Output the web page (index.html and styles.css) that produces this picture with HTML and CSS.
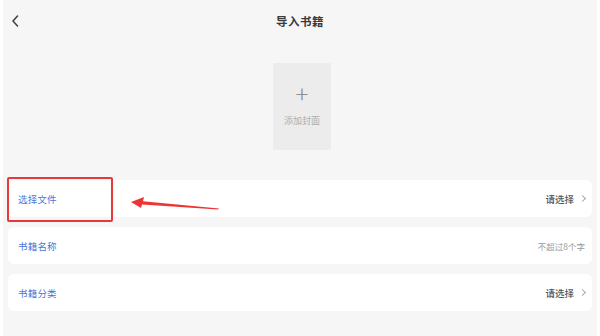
FILE: index.html
```html
<!doctype html>
<html lang="zh-CN">
<head>
  <meta charset="utf-8" />
  <title>导入书籍</title>
  <link rel="stylesheet" href="styles.css">
</head>
<body>
  <div class="page">
    <header class="topbar">
      <svg class="back" width="8" height="12" viewBox="0 0 8 12"><path d="M6.5 1 L2 6 L6.5 11" fill="none" stroke="#444" stroke-width="1.6" stroke-linecap="round" stroke-linejoin="round"/></svg>
      <h1>导入书籍</h1>
    </header>

    <div class="cover">
      <span class="plus">+</span>
      <span class="cover-text">添加封面</span>
    </div>

    <ul class="form">
      <li>
        <span class="label">选择文件</span>
        <span class="value">请选择<i class="chev"></i></span>
      </li>
      <li>
        <span class="label">书籍名称</span>
        <span class="hint">不超过8个字</span>
      </li>
      <li>
        <span class="label">书籍分类</span>
        <span class="value">请选择<i class="chev"></i></span>
      </li>

      <!-- 标注 -->
      <div class="mark-box"></div>
      <svg class="mark-arrow" width="92" height="14" viewBox="0 0 92 14">
        <polygon points="0,5 13,0 12,4.2 88,11.5 87,12.6 11,7.6 10,11" fill="#ee3535"/>
      </svg>
    </ul>
  </div>
</body>
</html>
```

FILE: styles.css
```css
/* ───────────── 기본 ───────────── */
html,body{ margin:0; padding:0; }
body{
  width:600px;
  height:336px;
  overflow:hidden;
  background:#fff;
  font-family:"Noto Sans CJK SC","Noto Sans",sans-serif;
  color:#333;
}
.page{
  height:336px;
  margin:0 3px;
  background:#f6f6f6;
  display:flex;
  flex-direction:column;
}

/* ───────────── 상단 ───────────── */
.topbar{
  position:relative;
  height:42px;
  display:flex;
  align-items:center;
  justify-content:center;
}
.back{
  position:absolute;
  left:8px;
  top:15px;
}
.topbar h1{
  margin:0;
  font-size:11.5px;
  font-weight:700;
  color:#3a3a3a;
  letter-spacing:.5px;
}

/* ───────────── 표지 ───────────── */
.cover{
  align-self:center;
  width:58px;
  height:87px;
  margin:21px 0 0 4px;
  background:#ececec;
  border-radius:2px;
  display:flex;
  flex-direction:column;
  align-items:center;
}
.plus{
  margin-top:18px;
  font-size:24px;
  line-height:24px;
  font-weight:300;
  color:#8d8d8d;
}
.cover-text{
  margin-top:9px;
  font-size:9px;
  color:#adadad;
}

/* ───────────── 목록 ───────────── */
.form{
  position:relative;
  list-style:none;
  margin:30px 0 0;
  padding:0 5px;
  display:flex;
  flex-direction:column;
  gap:10px;
}
.form li{
  height:37px;
  padding:0 7px 0 10px;
  background:#fff;
  border-radius:6px;
  display:flex;
  align-items:center;
  justify-content:space-between;
}
.label{
  font-size:9.5px;
  color:#4a76d6;
  letter-spacing:.2px;
}
.value{
  font-size:9.5px;
  font-weight:500;
  color:#555;
  display:flex;
  align-items:center;
  gap:6px;
}
.chev{
  width:4px;
  height:4px;
  border-top:1px solid #aaa;
  border-right:1px solid #aaa;
  transform:rotate(45deg);
}
.hint{
  font-size:8.5px;
  color:#999;
}

/* ───────────── 표시 ───────────── */
.mark-box{
  position:absolute;
  left:4px;
  top:-3px;
  width:102px;
  height:41px;
  border:2px solid #e8393a;
  border-radius:2px;
}
.mark-arrow{
  position:absolute;
  left:128px;
  top:17px;
}
```
